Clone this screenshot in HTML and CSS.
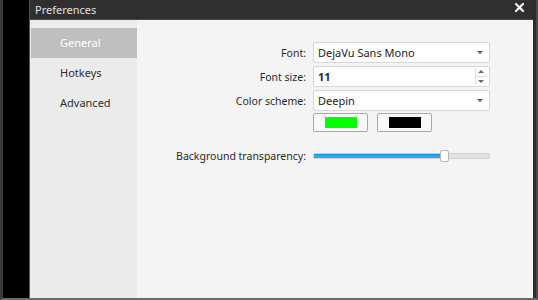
FILE: index.html
```html
<!DOCTYPE html>
<html lang="en">
<head>
<meta charset="UTF-8">
<title>Preferences</title>
<link rel="stylesheet" href="styles.css">
</head>
<body>
<div class="desktop">
  <div class="window">
    <div class="titlebar">
      <span class="title">Preferences</span>
      <svg class="close" width="9" height="9" viewBox="0 0 9 9">
        <path d="M1 1 L8 8 M8 1 L1 8" stroke="#fff" stroke-width="2.2" stroke-linecap="square"/>
      </svg>
    </div>
    <div class="main">
      <ul class="sidebar">
        <li class="active">General</li>
        <li>Hotkeys</li>
        <li>Advanced</li>
      </ul>
      <div class="content">
        <div class="row">
          <label>Font:</label>
          <div class="combo">DejaVu Sans Mono<span class="arrow"></span></div>
        </div>
        <div class="row">
          <label>Font size:</label>
          <div class="spin"><b>11</b>
            <span class="spin-btns"><span class="up"></span><span class="down"></span></span>
          </div>
        </div>
        <div class="row">
          <label>Color scheme:</label>
          <div class="combo">Deepin<span class="arrow"></span></div>
        </div>
        <div class="row colors">
          <label></label>
          <div class="swatches">
            <button class="swatch"><span class="green"></span></button>
            <button class="swatch"><span class="black"></span></button>
          </div>
        </div>
        <div class="row slider-row">
          <label>Background transparency:</label>
          <div class="slider">
            <div class="fill"></div>
            <div class="handle"></div>
          </div>
        </div>
      </div>
    </div>
  </div>
</div>
</body>
</html>
```
FILE: styles.css
```css
body {
  margin: 0;
  padding: 0;
  width: 538px;
  height: 300px;
  overflow: hidden;
  background-color: #000;
  font-family: "Noto Sans", "DejaVu Sans", sans-serif;
  font-size: 10.5px;
  color: #2a2a2a;
}

.desktop {
  display: flex;
  height: 300px;
  border-left: 3px solid #3a3a3a;
  border-right: 2px solid #4a4a4a;
  border-bottom: 2px solid #6a6a6a;
  box-sizing: border-box;
  padding-left: 26px;
}

.window {
  flex: 1;
  display: flex;
  flex-direction: column;
  border-left: 1px solid #555;
  border-right: 3px solid #2c2c2c;
}

.titlebar {
  height: 19px;
  background-color: #2f2f2f;
  border-bottom: 1px solid #484848;
  display: flex;
  align-items: center;
  justify-content: space-between;
  padding: 0 9px 0 5px;
  color: #e0e0e0;
}

.title {
  font-size: 11px;
}

.close {
  margin-top: -5px;
}

.main {
  flex: 1;
  display: flex;
}

.sidebar {
  list-style: none;
  margin: 0;
  padding: 8px 0 0 1px;
  width: 106px;
  background-color: #ebebeb;
}

.sidebar li {
  height: 30px;
  line-height: 30px;
  padding-left: 29px;
  font-size: 11px;
  color: #2e2e2e;
}

.sidebar li.active {
  background-color: #bfbfbf;
  color: #fff;
}

.content {
  flex: 1;
  background-color: #f4f4f4;
  padding-top: 22px;
}

.row {
  display: flex;
  align-items: center;
  height: 21px;
  margin-bottom: 3px;
}

.row label {
  width: 169px;
  text-align: right;
  padding-right: 7px;
  color: #2a2a2a;
}

.combo,
.spin {
  position: relative;
  width: 177px;
  height: 21px;
  box-sizing: border-box;
  background-color: #fff;
  border: 1px solid #d8d8d8;
  border-radius: 2px;
  padding-left: 4px;
  line-height: 19px;
  font-size: 11px;
  color: #222;
}

.spin b {
  font-weight: bold;
  color: #2a2a2a;
}

.arrow {
  position: absolute;
  right: 6px;
  top: 8px;
  border-left: 3px solid transparent;
  border-right: 3px solid transparent;
  border-top: 3px solid #555;
}

.spin-btns {
  position: absolute;
  right: 2px;
  top: 1px;
  width: 11px;
  height: 17px;
  display: flex;
  flex-direction: column;
  border-left: 1px solid #e0e0e0;
}

.spin-btns span {
  flex: 1;
  position: relative;
}

.spin-btns .up::after,
.spin-btns .down::after {
  content: "";
  position: absolute;
  left: 2px;
  border-left: 3px solid transparent;
  border-right: 3px solid transparent;
}

.spin-btns .up::after {
  top: 2px;
  border-bottom: 3px solid #666;
}

.spin-btns .down::after {
  top: 3px;
  border-top: 3px solid #666;
}

.spin-btns .down {
  border-top: 1px solid #e0e0e0;
}

.colors {
  height: 19px;
  margin-top: -1px;
}

.swatches {
  display: flex;
  gap: 9px;
}

.swatch {
  width: 55px;
  height: 19px;
  padding: 0;
  background-color: #f8f8f8;
  border: 1px solid #a8a8a8;
  border-radius: 2px;
  display: flex;
  align-items: center;
  justify-content: center;
}

.swatch span {
  width: 32px;
  height: 11px;
}

.green {
  background-color: #00ff00;
}

.black {
  background-color: #000;
}

.slider-row {
  margin-top: 13px;
}

.slider {
  position: relative;
  width: 177px;
  height: 6px;
  box-sizing: border-box;
  background-color: #e2e2e2;
  border: 1px solid #d0d0d0;
  border-radius: 2px;
}

.fill {
  width: 128px;
  height: 4px;
  background-color: #2ca7f0;
  border-top: 1px solid #1b8ad8;
  box-sizing: border-box;
}

.handle {
  position: absolute;
  left: 126px;
  top: -4px;
  width: 7px;
  height: 10px;
  background-color: #fff;
  border: 1px solid #b8b8b8;
  border-radius: 2px;
}
```
